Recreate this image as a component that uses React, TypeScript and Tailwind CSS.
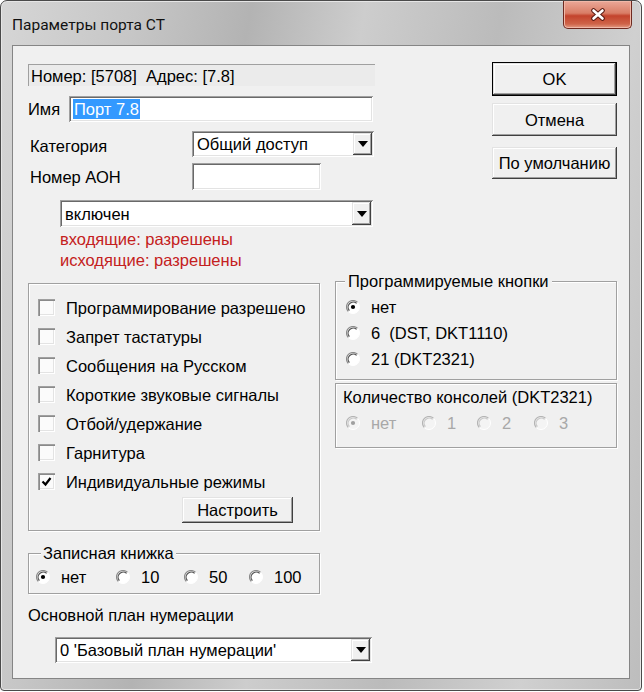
import type { ReactNode } from "react";

const sunken =
  "bg-white shadow-[inset_1px_1px_0_#a0a0a0,inset_-1px_-1px_0_#ffffff,inset_2px_2px_0_#696969,inset_-2px_-2px_0_#e3e3e3]";
const raised =
  "bg-[#f0f0f0] shadow-[inset_-1px_-1px_0_#404040,inset_1px_1px_0_#e3e3e3,inset_-2px_-2px_0_#a0a0a0,inset_2px_2px_0_#ffffff]";
const etched = "border border-[#a0a0a0] shadow-[inset_1px_1px_0_#ffffff,1px_1px_0_#ffffff]";

function Arrow() {
  return (
    <svg width="10" height="6" viewBox="0 0 10 6">
      <path d="M0 0h10L5 6z" fill="#000" />
    </svg>
  );
}

function Combo({ value, className }: { value: string; className: string }) {
  return (
    <div className={`${sunken} ${className} flex items-stretch p-[2px]`}>
      <span className="flex-1 pl-[3px] flex items-center whitespace-pre">{value}</span>
      <span className={`${raised} w-[19px] flex items-center justify-center`}>
        <Arrow />
      </span>
    </div>
  );
}

function CheckBox({ checked }: { checked?: boolean }) {
  return (
    <span className="w-[17px] h-[17px] shrink-0 flex items-center justify-center bg-[#fbfbfb] shadow-[inset_1px_1px_0_#a0a0a0,inset_2px_2px_0_#8a8a8a,inset_-1px_-1px_0_#ffffff,inset_-2px_-2px_0_#e3e3e3]">
      {checked && (
        <svg width="11" height="11" viewBox="0 0 11 11">
          <path d="M1.5 5.5l3 3 5-6.5" fill="none" stroke="#000" strokeWidth="2.2" />
        </svg>
      )}
    </span>
  );
}

function RadioDot({ on, disabled }: { on?: boolean; disabled?: boolean }) {
  return (
    <svg width="14" height="14" viewBox="0 0 14 14" className="shrink-0">
      <circle cx="7" cy="7" r="6.5" fill={disabled ? "#f4f4f4" : "#ffffff"} />
      <path d="M2.4 11.6A6.5 6.5 0 0 1 11.6 2.4" fill="none" stroke={disabled ? "#b4b4b4" : "#8a8a8a"} strokeWidth="1.2" />
      <path d="M3.4 10.6A5.1 5.1 0 0 1 10.6 3.4" fill="none" stroke={disabled ? "#c8c8c8" : "#505050"} strokeWidth="1.2" />
      <path d="M11.6 2.4A6.5 6.5 0 0 1 2.4 11.6" fill="none" stroke="#ffffff" />
      {on && <circle cx="7" cy="7" r="2.1" fill={disabled ? "#a0a0a0" : "#000000"} />}
    </svg>
  );
}

function Radio({ label, on, disabled, className = "" }: { label: string; on?: boolean; disabled?: boolean; className?: string }) {
  return (
    <div className={`flex items-center gap-[11px] ${className}`}>
      <RadioDot on={on} disabled={disabled} />
      <span className={disabled ? "text-[#a8a8a8]" : ""}>{label}</span>
    </div>
  );
}

function Btn({ children, className, def }: { children: ReactNode; className: string; def?: boolean }) {
  return (
    <div className={`${className} ${def ? "border border-black" : ""} flex`}>
      <div className={`${raised} flex-1 flex items-center justify-center`}>{children}</div>
    </div>
  );
}

const checks = [
  "Программирование разрешено",
  "Запрет тастатуры",
  "Сообщения на Русском",
  "Короткие звуковые сигналы",
  "Отбой/удержание",
  "Гарнитура",
  "Индивидуальные режимы",
];

export default function App() {
  return (
    <div className="w-[644px] h-[692px] bg-white font-['Liberation_Sans','DejaVu_Sans',sans-serif] text-[16.5px] leading-[20px] text-black">
      <div className="w-[642px] h-[691px] rounded-t-[7px] rounded-b-[4px] border border-[#4a4a4a] bg-[linear-gradient(100deg,#d6d6d6_0%,#c6c6c6_18%,#b3b3b3_33%,#cdcdcd_48%,#bbbbbb_66%,#d0d0d0_84%,#bdbdbd_100%)] flex flex-col shadow-[inset_0_0_0_1px_#e6e6e6]">
        {/* title bar */}
        <div className="h-[44px] flex items-start justify-between">
          <span className="mt-[14px] ml-[11px] font-['Roboto',sans-serif] text-[15.5px] leading-[20px] text-[#111]">
            Параметры порта СТ
          </span>
          <div className="mr-[9px] w-[69px] h-[28px] rounded-b-[5px] border border-t-0 border-[#6e2a20] bg-[linear-gradient(180deg,#eaa898_0%,#d97d66_45%,#c3432c_55%,#cf6449_85%,#e39c84_100%)] flex items-center justify-center shadow-[inset_0_0_0_1px_#f0b8a8]">
            <svg width="16" height="13" viewBox="0 0 16 13">
              <path d="M3.5 2.5l9 8M12.5 2.5l-9 8" stroke="#5a1a12" strokeWidth="4.6" strokeLinecap="round" />
              <path d="M3.5 2.5l9 8M12.5 2.5l-9 8" stroke="#ffffff" strokeWidth="2.6" strokeLinecap="round" />
            </svg>
          </div>
        </div>

        {/* client area */}
        <div className="mx-[11px] mb-[11px] flex-1 border border-[#858585] bg-[#f0f0f0] flex flex-col">
          {/* top section */}
          <div className="flex items-start">
            <div className="ml-[15px] w-[347px] flex flex-col">
              <div className="mt-[18px] h-[22px] bg-[#ebebeb] border-t border-l border-[#a0a0a0] border-r-white border-b-white flex items-center pl-[2px] whitespace-pre">
                Номер: [5708]  Адрес: [7.8]
              </div>
              <div className="mt-[10px] h-[26px] flex items-center">
                <span className="w-[41px]">Имя</span>
                <div className={`${sunken} w-[304px] h-[26px] flex items-center pl-[4px]`}>
                  <span className="bg-[#3399ff] text-white px-[1px]">Порт 7.8</span>
                </div>
              </div>
              <div className="mt-[9px] h-[26px] flex items-center">
                <span className="w-[164px] pl-[2px] pt-[4px]">Категория</span>
                <Combo value="Общий доступ" className="w-[182px] h-[26px]" />
              </div>
              <div className="mt-[6px] h-[27px] flex items-center">
                <span className="w-[164px] pl-[2px]">Номер АОН</span>
                <div className={`${sunken} w-[129px] h-[27px]`} />
              </div>
              <Combo value="включен" className="mt-[10px] ml-[32px] w-[313px] h-[27px]" />
              <div className="mt-[2px] ml-[32px] text-[#c42020] leading-[21px]">
                <div>входящие: разрешены</div>
                <div>исходящие: разрешены</div>
              </div>
            </div>

            <div className="ml-[117px] w-[125px] flex flex-col">
              <Btn def className="mt-[16px] h-[34px]">OK</Btn>
              <Btn className="mt-[7px] h-[33px]">Отмена</Btn>
              <Btn className="mt-[11px] h-[32px]">По умолчанию</Btn>
            </div>
          </div>

          {/* bottom section */}
          <div className="flex items-start">
            <div className="ml-[15px] w-[292px] flex flex-col">
              <div className={`${etched} mt-[12px] h-[248px] flex flex-col pt-[9px] pl-[9px]`}>
                {checks.map((c, i) => (
                  <div key={c} className="h-[29px] flex items-center gap-[11px]">
                    <CheckBox checked={i === 6} />
                    <span>{c}</span>
                  </div>
                ))}
                <Btn className="mt-[1px] ml-[144px] w-[111px] h-[26px]">Настроить</Btn>
              </div>

              <fieldset className={`${etched} mt-[12px] h-[51px] pl-[7px]`}>
                <legend className="ml-[5px] px-[2px] bg-[#f0f0f0]">Записная книжка</legend>
                <div className="mt-[4px] h-[20px] flex items-center">
                  <Radio on label="нет" className="w-[80px]" />
                  <Radio label="10" className="w-[68px]" />
                  <Radio label="50" className="w-[65px]" />
                  <Radio label="100" />
                </div>
              </fieldset>

              <div className="mt-[11px]">Основной план нумерации</div>
              <Combo value="0 'Базовый план нумерации'" className="mt-[12px] ml-[27px] w-[317px] h-[26px]" />
            </div>

            <div className="ml-[15px] w-[282px] flex flex-col">
              <fieldset className={`${etched} h-[109px] pl-[10px]`}>
                <legend className="ml-[-1px] px-[3px] bg-[#f0f0f0]">Программируемые кнопки</legend>
                <div className="mt-[3px] flex flex-col">
                  <Radio on label="нет" className="h-[26px]" />
                  <Radio label="6  (DST, DKT1110)" className="h-[26px] whitespace-pre" />
                  <Radio label="21 (DKT2321)" className="h-[26px]" />
                </div>
              </fieldset>

              <div className={`${etched} mt-[3px] h-[65px] flex flex-col`}>
                <div className="mt-[3px] ml-[7px]">Количество консолей (DKT2321)</div>
                <div className="mt-[6px] ml-[10px] h-[20px] flex items-center">
                  <Radio on disabled label="нет" className="w-[76px]" />
                  <Radio disabled label="1" className="w-[55px]" />
                  <Radio disabled label="2" className="w-[57px]" />
                  <Radio disabled label="3" />
                </div>
              </div>
            </div>
          </div>
        </div>
      </div>
    </div>
  );
}
